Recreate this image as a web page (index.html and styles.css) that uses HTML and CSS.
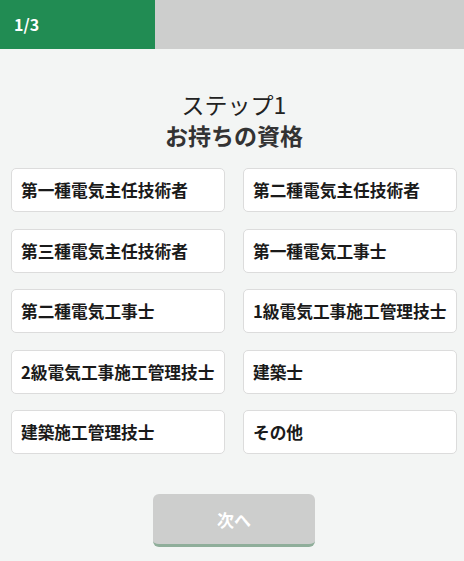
FILE: index.html
```html
<!DOCTYPE html>
<html lang="ja">
<head>
    <meta charset="UTF-8" />
    <meta name="viewport" content="width=device-width, initial-scale=1" />
    <title>ステップ1 | お持ちの資格</title>
    <link rel="stylesheet" href="styles.css">
</head>
<body>
    <div class="progress">
        <div class="progress-fill">1/3</div>
    </div>

    <div class="container">
        <h2 class="title">ステップ1<br><strong>お持ちの資格</strong></h2>

        <div class="choices">
            <button class="choice">第一種電気主任技術者</button>
            <button class="choice">第二種電気主任技術者</button>
            <button class="choice">第三種電気主任技術者</button>
            <button class="choice">第一種電気工事士</button>
            <button class="choice">第二種電気工事士</button>
            <button class="choice">1級電気工事施工管理技士</button>
            <button class="choice">2級電気工事施工管理技士</button>
            <button class="choice">建築士</button>
            <button class="choice">建築施工管理技士</button>
            <button class="choice">その他</button>
        </div>

        <div class="actions">
            <button class="next" disabled>次へ</button>
        </div>
    </div>
</body>
</html>
```

FILE: styles.css
```css
:root {
    --primary-color: #218c53;
    --muted-color: #cdcecd;
    --bg-color: #f3f5f4;
    --text-color: #1a1a1a;
}

body {
    font-family: "Noto Sans CJK JP", "Noto Sans", sans-serif;
    background-color: var(--bg-color);
    color: var(--text-color);
    margin: 0;
    padding: 0;
}

.progress {
    display: flex;
    height: 49px;
    background-color: var(--muted-color);
}

.progress-fill {
    width: 33.4%;
    background-color: var(--primary-color);
    color: white;
    font-weight: 700;
    font-size: 16px;
    line-height: 49px;
    padding-left: 14px;
    box-sizing: border-box;
}

.container {
    padding: 0 7px 0 11px;
}

.title {
    margin: 40px 0 17px;
    text-align: center;
    font-size: 23px;
    line-height: 31px;
    font-weight: 400;
    color: #222;
}

.title strong {
    font-weight: 700;
    color: #333;
}

.choices {
    display: grid;
    grid-template-columns: 1fr 1fr;
    column-gap: 18px;
    row-gap: 16.5px;
}

.choice {
    height: 44px;
    background-color: white;
    border: 1px solid #dcdcdc;
    border-radius: 5px;
    font-family: inherit;
    font-size: 16.7px;
    font-weight: 700;
    color: var(--text-color);
    text-align: left;
    padding: 0 0 0 9px;
    cursor: pointer;
    white-space: nowrap;
}

.actions {
    display: flex;
    justify-content: center;
    margin-top: 40px;
}

.next {
    width: 162px;
    height: 53px;
    background-color: var(--muted-color);
    border: none;
    border-bottom: 3px solid #8fae9a;
    border-radius: 6px;
    color: white;
    font-family: inherit;
    font-size: 17px;
    font-weight: 700;
}
```
